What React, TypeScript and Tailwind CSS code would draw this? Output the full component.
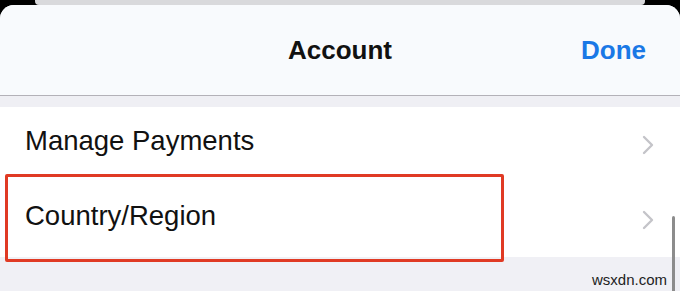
const FONT = 'font-["Liberation_Sans",Arial,sans-serif]';

const Chevron = () => (
  <svg width="12" height="20" viewBox="0 0 12 20" fill="none" className="shrink-0">
    <path d="M2 2 L10 10 L2 18" stroke="#c4c4c9" strokeWidth="2.4" strokeLinecap="round" strokeLinejoin="round" />
  </svg>
);

const Row = ({ label }: { label: string }) => (
  <div className="flex h-[75px] items-center justify-between bg-white pl-[25px] pr-[26px]">
    <span className="mb-[7px] text-[27.5px] leading-none text-[#111]">{label}</span>
    <Chevron />
  </div>
);

export default function App() {
  return (
    <div className={`relative h-[291px] w-[680px] overflow-hidden bg-black ${FONT}`}>
      {/* card behind the sheet */}
      <div className="mx-[35px] h-[5px] rounded-b-sm bg-[#d9d9dc]" />

      <div className="flex h-[286px] flex-col overflow-hidden rounded-t-[14px] bg-[#f0f0f5]">
        <div className="relative flex h-[91px] items-center justify-center border-b border-[#b3b1b8] bg-[#f8fafd]">
          <span className="text-[26px] font-bold leading-none text-[#111]">Account</span>
          <span className="absolute right-[34px] top-[32px] text-[26px] font-bold leading-none text-[#1a78e6]">Done</span>
        </div>
        <div className="h-[11px] bg-[#efeff4]" />
        <div className="relative">
          <Row label="Manage Payments" />
          <Row label="Country/Region" />
          {/* highlight box */}
          <div className="pointer-events-none absolute left-[5px] top-[67px] h-[88px] w-[499px] rounded-[2px] border-[3px] border-[#e03a24]" />
        </div>
        <div className="flex-1 bg-[#f0f0f5]" />
      </div>

      {/* scroll indicator */}
      <div className="absolute right-[5px] top-[216px] h-[80px] w-[3px] rounded-full bg-[#8c8c8c]" />
      {/* watermark */}
      <span className="absolute right-[13px] top-[272px] text-[15px] leading-none text-[#222]">wsxdn.com</span>
    </div>
  );
}
